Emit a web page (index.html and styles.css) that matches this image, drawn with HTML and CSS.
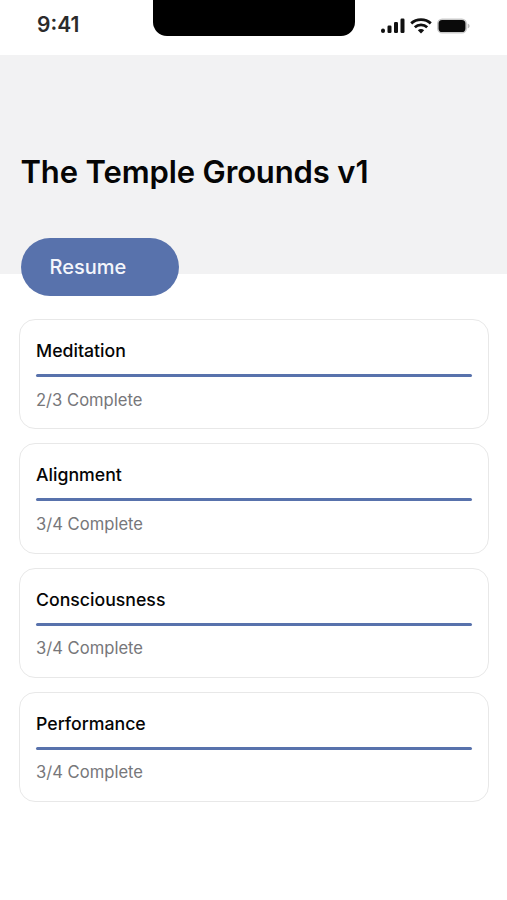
FILE: index.html
```html
<!DOCTYPE html>
<html lang="en">
<head>
  <meta charset="UTF-8">
  <title>The Temple Grounds v1</title>
  <link rel="stylesheet" href="styles.css">
</head>
<body>
  <div class="status-bar">
    <span class="time">9:41</span>
    <div class="notch"></div>
    <div class="status-icons">
      <svg width="24" height="16" viewBox="0 0 24 16" fill="#111">
        <rect x="0" y="10.5" width="4" height="4.5" rx="2"/>
        <rect x="6.5" y="7.5" width="4" height="7.5" rx="1.2"/>
        <rect x="13" y="4" width="4" height="11" rx="1.2"/>
        <rect x="19.5" y="0.5" width="4" height="14.5" rx="1.2"/>
      </svg>
      <svg width="22" height="16" viewBox="0 0 22 16" fill="none" stroke="#111" stroke-width="2.8">
        <path d="M1.2 5.4C6.6 0.4 15.4 0.4 20.8 5.4"/>
        <path d="M4.8 9.2C8.2 6.1 13.8 6.1 17.2 9.2"/>
        <path d="M7.8 12.2C9.6 10.6 12.4 10.6 14.2 12.2L11 15.6Z" fill="#111" stroke="none"/>
      </svg>
      <svg width="33" height="16" viewBox="0 0 33 16">
        <rect x="0.8" y="1.2" width="28.4" height="13.6" rx="4.4" fill="#0a0a0a" stroke="#c9c9c9" stroke-width="1.6"/>
        <path d="M30.6 5.6C32 6 32.6 7 32.6 8S32 10 30.6 10.4Z" fill="#bdbdbd"/>
      </svg>
    </div>
  </div>

  <div class="hero">
    <h1>The Temple Grounds v1</h1>
    <button class="resume-btn">Resume</button>
  </div>

  <div class="card-list">
    <div class="card">
      <div class="card-title">Meditation</div>
      <div class="progress"></div>
      <div class="card-status">2/3 Complete</div>
    </div>
    <div class="card">
      <div class="card-title">Alignment</div>
      <div class="progress"></div>
      <div class="card-status">3/4 Complete</div>
    </div>
    <div class="card">
      <div class="card-title">Consciousness</div>
      <div class="progress"></div>
      <div class="card-status">3/4 Complete</div>
    </div>
    <div class="card">
      <div class="card-title">Performance</div>
      <div class="progress"></div>
      <div class="card-status">3/4 Complete</div>
    </div>
  </div>
</body>
</html>
```

FILE: styles.css
```css
* {
  box-sizing: border-box;
}

body {
  margin: 0;
  height: 900px;
  overflow: hidden;
  font-family: Inter, "Liberation Sans", sans-serif;
  background: #fff;
  color: #000;
}

.status-bar {
  height: 55px;
  display: grid;
  grid-template-columns: 153px 202px 1fr;
  align-items: start;
}

.time {
  margin: 12px 0 0 37px;
  font-size: 21px;
  line-height: 25px;
  font-weight: 600;
  color: #2b2b2b;
}

.notch {
  height: 35.5px;
  background: #000;
  border-radius: 0 0 14px 14px;
}

.status-icons {
  display: flex;
  align-items: center;
  gap: 5px;
  margin: 18px 0 0 26px;
}

.hero {
  height: 219px;
  padding: 100px 20.5px 0;
  background: #f2f2f3;
}

.hero h1 {
  margin: 0;
  font-size: 31px;
  line-height: 34px;
  font-weight: 600;
  letter-spacing: -0.13px;
  color: #050505;
}

.resume-btn {
  display: block;
  width: 158px;
  height: 58px;
  margin-top: 49px;
  padding: 0 0 0 29px;
  border: none;
  border-radius: 29px;
  background: #5872ac;
  color: #f4f6fb;
  font-family: inherit;
  font-size: 20px;
  font-weight: 500;
  text-align: left;
}

.card-list {
  display: flex;
  flex-direction: column;
  gap: 14px;
  padding: 45px 18px 0 19px;
}

.card {
  height: 110.3px;
  padding: 20px 16px 0;
  border: 1px solid #e8e8e8;
  border-radius: 16px;
  background: #fff;
}

.card-title {
  font-size: 17.7px;
  line-height: 22px;
  font-weight: 550;
  color: #050505;
}

.progress {
  height: 3px;
  margin-top: 12px;
  background: #5872ac;
  border-radius: 2px;
}

.card-status {
  margin-top: 12.5px;
  font-size: 16.6px;
  line-height: 20px;
  color: #77777a;
}
```
